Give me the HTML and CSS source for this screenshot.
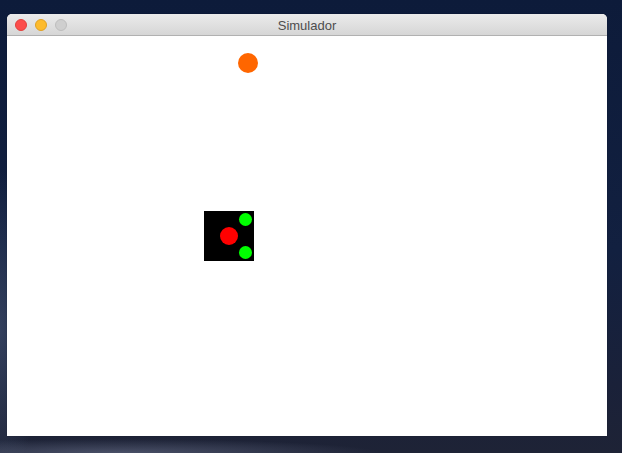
FILE: index.html
```html
<!DOCTYPE html>
<html>
<head>
<meta charset="utf-8">
<link rel="stylesheet" href="styles.css">
</head>
<body>
<div class="desktop">
  <div class="window">
    <div class="titlebar">
      <div class="lights">
        <span class="light red"></span>
        <span class="light yellow"></span>
        <span class="light gray"></span>
      </div>
      <div class="title">Simulador</div>
    </div>
    <div class="canvas">
      <div class="ball"></div>
      <div class="robot">
        <span class="body-dot"></span>
        <span class="sensor top"></span>
        <span class="sensor bottom"></span>
      </div>
    </div>
  </div>
</div>
</body>
</html>
```
FILE: styles.css
```css
html, body {
  margin: 0;
  padding: 0;
}
body {
  width: 622px;
  height: 453px;
  overflow: hidden;
  font-family: "Liberation Sans", Arial, sans-serif;
}
.desktop {
  width: 622px;
  height: 453px;
  padding: 14px 0 0 7px;
  box-sizing: border-box;
  background:
    radial-gradient(ellipse 260px 14px at 120px 453px, rgba(110,118,145,0.55), transparent 100%),
    radial-gradient(ellipse 40px 160px at 0px 330px, rgba(70,85,115,0.6), transparent 100%),
    linear-gradient(180deg, #0d1b3a 0%, #122040 55%, #1a2139 85%, #1e2336 100%);
}
.window {
  width: 600px;
  height: 422px;
  border-radius: 5px 5px 0 0;
  overflow: hidden;
  display: flex;
  flex-direction: column;
  background: #fff;
  box-shadow: 0 0 1px rgba(0,0,0,0.5);
}
.titlebar {
  height: 21px;
  flex: none;
  position: relative;
  background: linear-gradient(180deg, #ebebeb 0%, #d6d6d6 100%);
  border-bottom: 1px solid #b1b1b1;
  display: flex;
  align-items: center;
  justify-content: center;
}
.lights {
  position: absolute;
  left: 8px;
  top: 5px;
  display: flex;
  gap: 8px;
}
.light {
  width: 12px;
  height: 12px;
  border-radius: 50%;
  box-sizing: border-box;
}
.red { background: #fc4d4b; border: 1px solid #e0403c; }
.yellow { background: #fdbb2d; border: 1px solid #dfa023; }
.gray { background: #cfcfcf; border: 1px solid #bdbdbd; }
.title {
  font-size: 13px;
  color: #4d4d4d;
  margin-top: 1px;
}
.canvas {
  flex: 1;
  position: relative;
  background: #fff;
}
.ball {
  position: absolute;
  left: 231px;
  top: 17px;
  width: 20px;
  height: 20px;
  border-radius: 50%;
  background: #ff6600;
}
.robot {
  position: absolute;
  left: 197px;
  top: 175px;
  width: 50px;
  height: 50px;
  background: #000;
}
.body-dot {
  position: absolute;
  left: 16px;
  top: 16px;
  width: 18px;
  height: 18px;
  border-radius: 50%;
  background: #ff0000;
}
.sensor {
  position: absolute;
  left: 35px;
  width: 13px;
  height: 13px;
  border-radius: 50%;
  background: #00ff00;
}
.sensor.top { top: 2px; }
.sensor.bottom { top: 35px; }
```
